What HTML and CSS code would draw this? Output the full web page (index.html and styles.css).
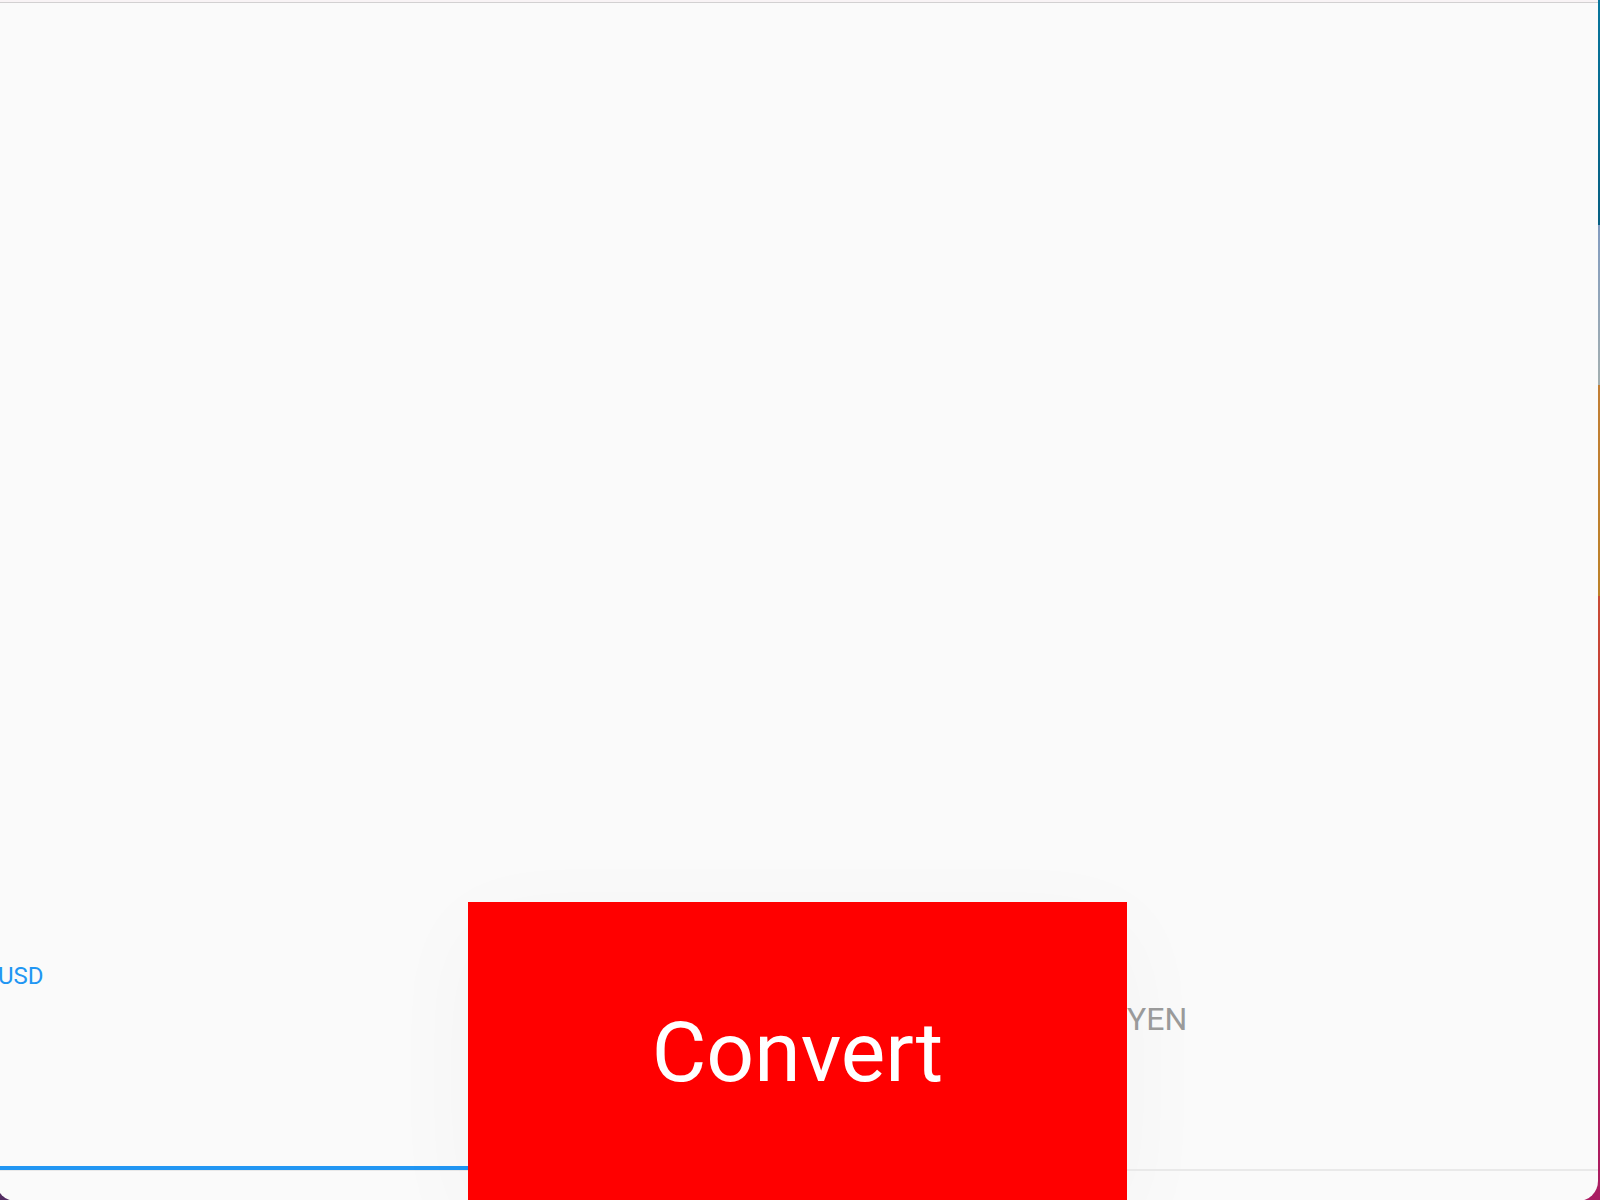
FILE: index.html
```html
<!DOCTYPE html>
<html lang="en">
<head>
<meta charset="utf-8">
<title>Currency converter</title>
<link rel="stylesheet" href="styles.css">
</head>
<body>
<main class="window">
  <form class="converter">
    <div class="field field-active">
      <label class="field-label" for="usd">USD</label>
      <input class="field-input" id="usd" type="text">
    </div>
    <button class="convert" type="button">Convert</button>
    <div class="field">
      <label class="field-label" for="yen">YEN</label>
      <input class="field-input" id="yen" type="text">
    </div>
  </form>
</main>
</body>
</html>
```
FILE: styles.css
```css
* {
  box-sizing: border-box;
}

/* Desktop wallpaper behind the application window */
body {
  margin: 0;
  height: 100vh;
  overflow: hidden;
  padding-right: 2px;
  background:
    linear-gradient(#532d62, #532d62) left bottom / 40px 40px no-repeat,
    linear-gradient(#08759c 0%, #075f82 225px, #829cc0 225px, #a3afb0 385px,
      #c17e35 385px, #bc8128 596px, #c84c35 596px, #c43038 800px,
      #b81c56 1000px, #a91d62 100%);
  font-family: Roboto, sans-serif;
}

.window {
  display: flex;
  flex-direction: column;
  justify-content: flex-end;
  height: calc(100vh + 1px);
  margin-left: -4px;
  padding-left: 2px;
  overflow: hidden;
  border-top: 2px solid #f8f3f5;
  border-radius: 0 0 20px 20px;
  background: #fafafa;
  box-shadow: inset 0 1px #d2d0d1;
}

.converter {
  display: grid;
  grid-template-columns: 470fr 659fr 471fr;
  height: 299px;
}

.field {
  display: flex;
  flex-direction: column;
  height: 269px;
  border-bottom: 2px solid #e9e9e9;
}

.field-active {
  height: 268px;
  border-bottom: 4px solid #2196f3;
  box-shadow: 0 1px #e9e9e9;
}

.field-label {
  padding-top: 98px;
  font-size: 32px;
  line-height: 38px;
  color: #9a9a9a;
}

.field-active .field-label {
  padding-top: 60px;
  font-size: 24px;
  line-height: 28px;
  color: #2196f3;
}

.field-input {
  flex: 1;
  width: 100%;
  min-height: 0;
  padding: 0;
  border: 0;
  outline: 0;
  background: transparent;
  font: inherit;
  font-size: 84px;
}

.convert {
  padding: 2px 0 0;
  border: 0;
  background: #ff0000;
  box-shadow: 0 24px 100px rgba(0, 0, 0, 0.03);
  color: #ffffff;
  font-family: inherit;
  font-size: 84px;
  line-height: 98px;
}
```
